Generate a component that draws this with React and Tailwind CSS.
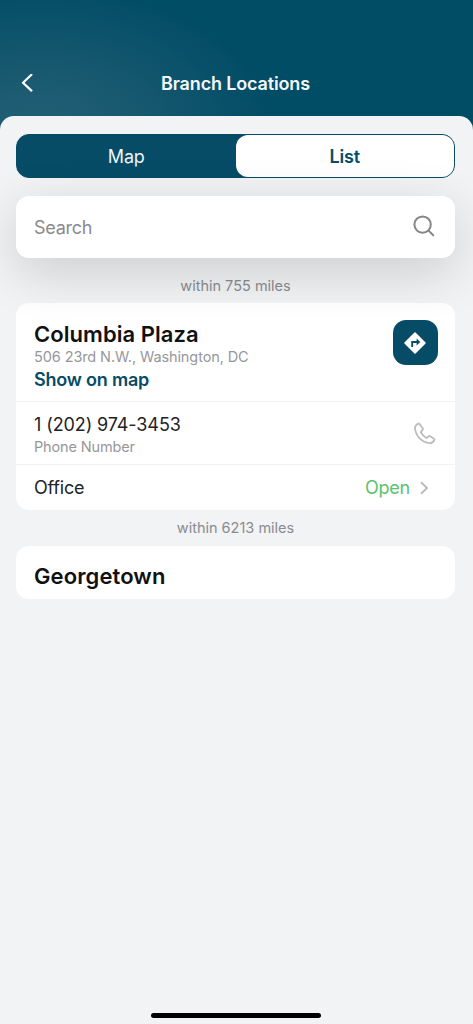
import React from "react";

function BackIcon() {
  return (
    <svg width="12" height="20" viewBox="0 0 12 20" fill="none" stroke="white" strokeWidth="2.2" strokeLinecap="round" strokeLinejoin="round">
      <path d="M10.400 0.800 2 8.700 10.400 16.600" />
    </svg>
  );
}

function SearchIcon() {
  return (
    <svg width="22" height="22" viewBox="0 0 22 22" fill="none" stroke="#85858b" strokeWidth="2" strokeLinecap="round">
      <circle cx="9.6" cy="9.6" r="8.2" />
      <path d="m15.600 15.600 4.600 4.600" />
    </svg>
  );
}

function DirectionsIcon() {
  return (
    <svg width="24" height="24" viewBox="0 0 24 24" fill="none">
      <path d="M12 2 22 12 12 22 2 12Z" fill="white" stroke="white" strokeWidth="1.6" strokeLinejoin="round" />
      <path d="M9.200 16v-5h5" stroke="#064c66" strokeWidth="1.900" />
      <path d="m13.600 7.600 3.700 3.400-3.700 3.400Z" fill="#064c66" />
    </svg>
  );
}

function PhoneIcon() {
  return (
    <svg width="23" height="23" viewBox="0 0 24 24" fill="none" stroke="#bdbdc0" strokeWidth="1.9" strokeLinejoin="round">
      <path d="M5.2 1.800C3.800 2.600 1.900 4.500 2.100 6.800c.7 7.600 7.500 14.600 15.100 15.300 2.300.2 4.200-1.600 5-3 .4-.7.200-1.200-.4-1.600l-3.900-2.700c-.6-.4-1.200-.3-1.700.2l-1.300 1.400c-.4.400-.8.400-1.300.1-2-1.200-3.900-3.100-5.200-5.200-.3-.5-.3-.9.100-1.300L9.900 8.200c.5-.5.600-1.100.2-1.700L6.900 2.200c-.5-.6-1-.8-1.700-.4Z" />
    </svg>
  );
}

function ChevronIcon() {
  return (
    <svg width="9" height="14" viewBox="0 0 9 14" fill="none" stroke="#bcbcc0" strokeWidth="2" strokeLinecap="round" strokeLinejoin="round">
      <path d="M1.600 1.800 7 7 1.600 12.200" />
    </svg>
  );
}

function DistanceLabel({ children, className }) {
  return <p className={`text-center text-[14.5px] leading-5 text-[#8b8b90] ${className}`}>{children}</p>;
}

export default function App() {
  return (
    <div className="flex h-[1024px] w-full flex-col overflow-hidden bg-[#024d66] bg-[radial-gradient(ellipse_230px_140px_at_40px_128px,#225f75,#1a5a70_35%,#024d66)] font-['Inter',sans-serif]">
      <header className="grid h-[116px] shrink-0 grid-cols-[1fr_auto_1fr] items-center pt-[51px] pr-[23px] pl-[21px]">
        <button aria-label="Back" className="justify-self-start">
          <BackIcon />
        </button>
        <h1 className="text-[18px] leading-6 font-semibold tracking-[-0.15px] text-[#f3f7f8]">Branch Locations</h1>
      </header>

      <main className="flex flex-1 flex-col rounded-t-[14px] bg-[#f1f3f5] pt-[18px] pr-[18px] pl-4">
        <div className="flex h-11 shrink-0 rounded-[13px] border border-[#064c66] bg-[#064c66] text-[18px] tracking-[-0.15px]">
          <button className="flex-1 text-[#eef4f6]">Map</button>
          <button className="flex-1 rounded-xl bg-white font-semibold text-[#064c66]">List</button>
        </div>

        <div className="relative z-10 mt-[18px] flex h-[62px] shrink-0 items-center justify-between rounded-[13px] bg-white pr-5 pl-[18px] shadow-[0_14px_52px_rgba(0,0,0,0.16)]">
          <span className="text-[18px] tracking-[-0.25px] text-[#8a8a8e]">Search</span>
          <span className="pb-0.5">
            <SearchIcon />
          </span>
        </div>

        <DistanceLabel className="mt-[18px]">within 755 miles</DistanceLabel>

        <section className="mt-[7px] rounded-[13px] bg-white">
          <div className="flex h-[98px] items-start justify-between pt-[17px] pr-[17px] pl-[18px]">
            <div className="pt-px">
              <h2 className="text-[22px] leading-[27px] font-semibold tracking-[0.05px] text-[#111112]">Columbia Plaza</h2>
              <p className="text-[14.500px] leading-[18px] tracking-[-0.1px] text-[#97979b]">506 23rd N.W., Washington, DC</p>
              <a className="block text-[18px] leading-[27px] font-semibold tracking-[-0.2px] text-[#064c66]">Show on map</a>
            </div>
            <button aria-label="Directions" className="flex size-[45px] items-center justify-center rounded-[13px] bg-[#064c66] pr-px">
              <DirectionsIcon />
            </button>
          </div>
          <div className="flex h-[63px] items-center justify-between border-t border-[#f2f2f4] pr-[19px] pl-[18px]">
            <div className="pt-1">
              <p className="text-[18px] leading-6 tracking-[-0.1px] text-[#232325]">1 (202) 974-3453</p>
              <p className="text-[14.500px] leading-5 tracking-[-0.15px] text-[#97979b]">Phone Number</p>
            </div>
            <PhoneIcon />
          </div>
          <div className="flex h-[46px] items-center border-t border-[#f2f2f4] pr-[26px] pl-[18px] text-[18px] tracking-[-0.2px]">
            <span className="flex-1 text-[#232325]">Office</span>
            <span className="mr-[10px] text-[#58c470]">Open</span>
            <ChevronIcon />
          </div>
        </section>

        <DistanceLabel className="mt-2">within 6213 miles</DistanceLabel>

        <section className="mt-[7.500px] flex h-[53px] shrink-0 items-center rounded-[13px] bg-white px-[18px] pt-[9px]">
          <h2 className="text-[22px] leading-[27px] font-semibold tracking-[0.1px] text-[#111112]">Georgetown</h2>
        </section>

        <div className="mt-auto mb-1.5 h-[5px] w-[170px] self-center rounded-full bg-black" />
      </main>
    </div>
  );
}
